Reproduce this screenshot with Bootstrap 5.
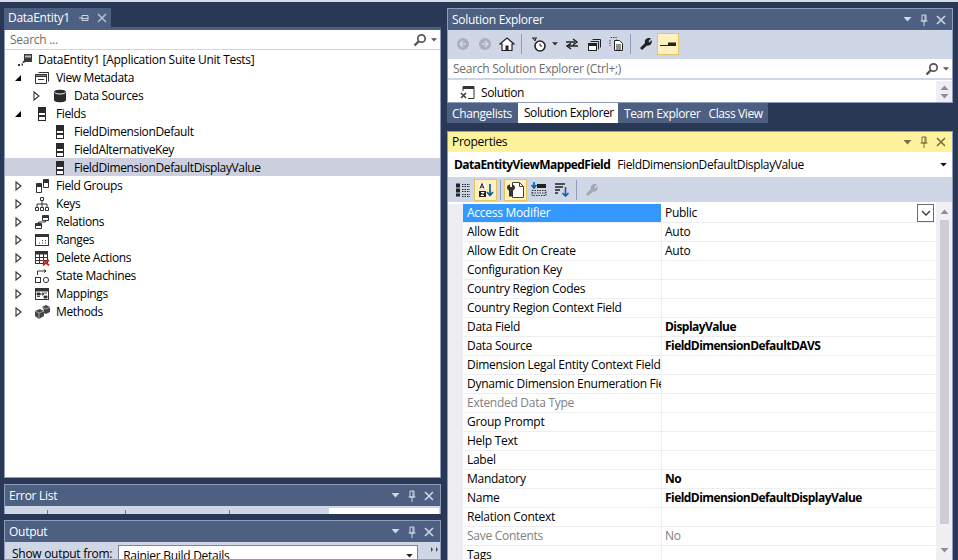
<!DOCTYPE html>
<html lang="en"><head><meta charset="utf-8"><title>Visual Studio</title>
<link href="https://cdn.jsdelivr.net/npm/bootstrap@5.3.0/dist/css/bootstrap.min.css" rel="stylesheet">
<style>
html,body{height:560px;overflow:hidden}
body{background:#293955;font:12px/18px "Open Sans","Noto Sans",sans-serif;color:#000;letter-spacing:-.28px}
.topstrip{height:2px;background:#d6dbe9}
.shell{height:558px;padding:6px 5px 0 4px;gap:6px}
.leftcol{width:437px;flex:none}
.rightcol{width:506px;flex:none}
.tabrow{height:19px}
.doctab{width:107px;height:19px;background:#4d6082;color:#fff;padding:0 0 0 4px;line-height:19px}
.pinbtn{color:#cfd6e5;margin-left:9px}
.xbtn{color:#b5bfd3;margin-left:8px}
.tabwell{height:3px;background:#4d6082}
.panelbox{border:1px solid #8e9bbc;background:#fff}
.treebox{height:450px;border-top:0}
.searchbar{height:20px;border-bottom:1px solid #cfd6e5;color:#6d6d6d;padding:1px 3px 0 5px}
.treerow{height:18px;line-height:18px;white-space:nowrap;padding-top:2px;letter-spacing:-.37px}
.treerow.rootrow{letter-spacing:-.28px}
.treerow.on{background:#ccd0de}
.lv0{padding-left:11px}.lv1{padding-left:4px}.lv2{padding-left:22px}
.arr{width:18px;flex:none;display:flex;justify-content:center}
.ic{width:18px;margin:0 5px 0 6px;flex:none;display:flex;justify-content:center}
.lv0 .ic{margin:0 4px 0 0}
.headbar{height:21px;background:#4d6082;color:#fff;padding:0 6px 0 4px;line-height:21px}
.headbar.act{background:#fff29d;color:#000;height:20px;line-height:20px}
.wbtns{gap:7px}
.errbox{height:30px}
.strip{height:8px;background:#cfd6e5;overflow:hidden}
.tick{height:4px;margin-top:4px;border-right:1px solid #6d7890;flex:none}
.t1{width:43px}.t2{width:78px}.t3{width:104px}.t4{width:99px;flex:none}
.whitebox{width:110px;height:6px;margin-top:2px;background:#fff;flex:none}
.outbox{height:40px;background:#cfd6e5;overflow:hidden}
.outtool{padding:3px 0 0 7px;color:#000;gap:6px;white-space:nowrap}
.fakeselect{width:300px;height:22px;background:#fff;border:1px solid #7d8797;padding:0 4px;line-height:18px;flex:none}
.grip{margin-left:7px;margin-top:2px;color:#444;flex:none}
.sebox{height:95px}
.toolbar{background:#cfd6e5}
.setool{height:28px;padding-left:4px}
.ptool{height:25px;padding-left:3px}
.tb{width:22px;height:22px;display:flex;align-items:center;justify-content:center;flex:none;border:1px solid transparent}
.ptool .tb{width:23px}
.tb.onbtn{background:#fff0c0;border-color:#e5c365}
.sep{width:1px;height:20px;background:#8e9bbc;margin:0 3px;flex:none}
.clk{width:20px;margin-left:4px}
.ddmini{margin:0 3px;flex:none}
.wr{margin-left:1px}
.searchse{height:22px;border-bottom:2px solid #cfd6e5;border-top:1px solid #cfd6e5;color:#6d6d6d;padding:0 3px 0 5px;margin-bottom:1px}
.solrow{height:21px;padding:2px 0 0 12px;gap:5px;line-height:21px;letter-spacing:-.37px}
.miniscroll{width:16px;background:#eeeef2;height:21px}
.tabsbar{height:20px;color:#fff;letter-spacing:-.37px}
.btab{background:#4d6082;padding:0 4px 0 6px;line-height:21px;white-space:nowrap}
.btab.first{padding:0 6px 0 5px}
.btab.last{padding:0 5px 0 4px}
.btab.on{background:#fff;color:#000;line-height:19px}
.gapv{height:8px}
.gaps{height:6px}
.propbox{height:429px;border-bottom:0}
.objsel{height:25px;padding:0 5px 0 6px;line-height:24px;letter-spacing:-.37px}
.objname{margin-left:7px}
.gridarea{overflow:hidden;height:358px;background:#fff;padding-top:2px}
.margin{width:15px;background:#eeeef2;flex:none}
.pgrid{width:472px;flex:none}
.prow{height:19px;border-bottom:1px solid #eeeef2;line-height:18px;white-space:nowrap}
.pname{width:199px;padding-left:4px;flex:none;overflow:hidden;border-right:1px solid #eeeef2}
.pval{padding-left:3px;flex:1}
.prow.sel .pname{width:198px;background:#39f;color:#fff;border-right:0;margin-right:1px}
.dim{color:#808080}
.bold{font-weight:700;letter-spacing:-.55px}
.ddbtn{width:17px;height:18px;border:1px solid #6d6d6d;background:#fff;margin-right:1px;display:flex;align-items:center;justify-content:center}
.pscroll{width:16px;flex:none;background:#f0f0f3;margin-left:1px;margin-top:-2px}
.thumb{width:9px;height:304px;background:#cdcdd3;margin:0 auto}
.arrcell{height:18px}
.arrcell.bot{margin-top:17px}
.flip{transform:scaleY(-1)}
.hc{color:#cfd6e5}
.hd{color:#7a6f3f}
.sc{color:#8b8ca0}
.cd{color:#555}
.ck{color:#222}
.gw{color:#a3a7b2}
</style></head><body>
<svg width="0" height="0" class="d-none" aria-hidden="true"><defs>
<symbol id="open" viewBox="0 0 10 10"><path d="M8 2v6H2z" fill="#000"/></symbol>
<symbol id="closed" viewBox="0 0 10 10"><path d="M3 1l5 4-5 4z" fill="#fff" stroke="#333" stroke-width="1.1"/></symbol>
<symbol id="fld" viewBox="0 0 16 16"><rect x="4.500" y="1.500" width="7" height="13" fill="#fff" stroke="#2a2a2a"/><rect x="5" y="2" width="6" height="5" fill="#2a2a2a"/><rect x="5" y="9" width="6" height="2" fill="#2a2a2a"/></symbol>
<symbol id="x" viewBox="0 0 10 10"><path d="M1 1l8 8M9 1l-8 8" stroke="currentColor" stroke-width="1.6" fill="none"/></symbol>
<symbol id="pin" viewBox="0 0 10 12"><path d="M3 1h4v6H3zM1.500 7h7M5 7v5M6 1v6" stroke="currentColor" fill="none"/></symbol>
<symbol id="drop" viewBox="0 0 8 5"><path d="M0 0h8L4 4.500z" fill="currentColor"/></symbol>
<symbol id="mag" viewBox="0 0 14 14"><circle cx="8.500" cy="5.500" r="3.700" fill="none" stroke="#555" stroke-width="1.700"/><path d="M6 8l-4.500 4.500" stroke="#555" stroke-width="2.400"/></symbol>
<symbol id="wrench" viewBox="0 0 14 14"><path d="M1 11l5-5C5 3 8 0 12 1.500L9.500 4l1 1.500 2-2.500C14 7 10 9.500 8 8.500L3 13z" fill="currentColor"/></symbol>
</defs></svg>
<div class="topstrip"></div>
<div class="shell d-flex">
 <div class="leftcol d-flex flex-column">
  <div class="tabrow"><div class="doctab d-flex align-items-center"><span>DataEntity1</span><svg class="pinbtn" width="10" height="10" viewBox="0 0 10 10"><path d="M0 5h3M3 2.500h6v5H3zM3 5.500h6" stroke="currentColor" fill="none"/></svg><svg class="xbtn" width="10" height="10"><use href="#x"/></svg></div></div>
  <div class="tabwell"></div>
  <div class="panelbox treebox">
   <div class="searchbar d-flex justify-content-between align-items-center"><span>Search ...</span><span class="d-flex align-items-center gap-1"><svg width="14" height="14"><use href="#mag"/></svg><svg class="cd" width="6" height="4"><use href="#drop"/></svg></span></div>
   <div class="treerow rootrow d-flex align-items-center lv0"><span class="ic"><svg width="16" height="16" viewBox="0 0 16 16"><rect x="7" y="2" width="8" height="8" fill="#3a3a3a"/><rect x="8" y="3.500" width="6" height="2" fill="#bbb"/><path d="M1 13h2M4.500 12.500h1.500M6 10.500l2-1.500" stroke="#333" stroke-width="2" fill="none"/></svg></span><span>DataEntity1 [Application Suite Unit Tests]</span></div>
   <div class="treerow d-flex align-items-center lv1"><span class="arr"><svg width="10" height="10"><use href="#open"/></svg></span><span class="ic"><svg width="16" height="16" viewBox="0 0 16 16"><path d="M4.500 2.500h10v9M1.500 4.500h11v9h-11z" fill="#fff" stroke="#333"/><path d="M1.500 4.500h11v2h-11zM4 9.500h6" fill="#888" stroke="#333"/></svg></span><span>View Metadata</span></div>
   <div class="treerow d-flex align-items-center lv2"><span class="arr"><svg width="10" height="10"><use href="#closed"/></svg></span><span class="ic"><svg width="14" height="14" viewBox="0 0 14 14"><path d="M1 3c0-3 12-3 12 0v8c0 3-12 3-12 0z" fill="#2a2a2a"/><path d="M1.500 3.500c2 2 9 2 11 0" stroke="#fff" fill="none"/></svg></span><span>Data Sources</span></div>
   <div class="treerow d-flex align-items-center lv1"><span class="arr"><svg width="10" height="10"><use href="#open"/></svg></span><span class="ic"><svg width="16" height="16"><use href="#fld"/></svg></span><span>Fields</span></div>
   <div class="treerow d-flex align-items-center lv2"><span class="arr"></span><span class="ic"><svg width="16" height="16"><use href="#fld"/></svg></span><span>FieldDimensionDefault</span></div>
   <div class="treerow d-flex align-items-center lv2"><span class="arr"></span><span class="ic"><svg width="16" height="16"><use href="#fld"/></svg></span><span>FieldAlternativeKey</span></div>
   <div class="treerow on d-flex align-items-center lv2"><span class="arr"></span><span class="ic"><svg width="16" height="16"><use href="#fld"/></svg></span><span>FieldDimensionDefaultDisplayValue</span></div>
   <div class="treerow d-flex align-items-center lv1"><span class="arr"><svg width="10" height="10"><use href="#closed"/></svg></span><span class="ic"><svg width="16" height="16" viewBox="0 0 16 16"><path d="M2.500 5.500h5v9h-5zM9.500 1.500h5v8h-5z" fill="#fff" stroke="#333"/><path d="M3 6h4v3H3zM10 2h4v3h-4z" fill="#333"/></svg></span><span>Field Groups</span></div>
   <div class="treerow d-flex align-items-center lv1"><span class="arr"><svg width="10" height="10"><use href="#closed"/></svg></span><span class="ic"><svg width="16" height="16" viewBox="0 0 16 16"><path d="M6.500 1.500h3v3h-3zM1.500 11.500h3v3h-3zM6.500 11.500h3v3h-3zM11.500 11.500h3v3h-3zM8 4.500v7M3 11.500V8h10v3.500" fill="none" stroke="#333"/></svg></span><span>Keys</span></div>
   <div class="treerow d-flex align-items-center lv1"><span class="arr"><svg width="10" height="10"><use href="#closed"/></svg></span><span class="ic"><svg width="16" height="16" viewBox="0 0 16 16"><path d="M1.500 9.500h6v5h-6zM8.500 1.500h6v5h-6zM4.500 9.500V8h7V6.500" fill="#fff" stroke="#333"/><path d="M2 10h5v2H2zM9 2h5v2H9z" fill="#333"/></svg></span><span>Relations</span></div>
   <div class="treerow d-flex align-items-center lv1"><span class="arr"><svg width="10" height="10"><use href="#closed"/></svg></span><span class="ic"><svg width="16" height="16" viewBox="0 0 16 16"><rect x="1.500" y="2.500" width="13" height="11" fill="#fff" stroke="#333"/><path d="M1.500 3h13v2h-13z" fill="#333"/><path d="M5 11h1M8 11h1M11 11h1M8 8.500h1M11 8.500h1" stroke="#333"/></svg></span><span>Ranges</span></div>
   <div class="treerow d-flex align-items-center lv1"><span class="arr"><svg width="10" height="10"><use href="#closed"/></svg></span><span class="ic"><svg width="16" height="16" viewBox="0 0 16 16"><rect x="1.500" y="1.500" width="12" height="12" fill="#fff" stroke="#333"/><path d="M1.500 2h12v2h-12zM1.500 7.500h12M1.500 10.500h12M5.500 4v10M9.500 4v10" fill="#333" stroke="#333"/><path d="M9 10l6 5.500M15 10l-6 5.500" stroke="#c5281c" stroke-width="1.700"/></svg></span><span>Delete Actions</span></div>
   <div class="treerow d-flex align-items-center lv1"><span class="arr"><svg width="10" height="10"><use href="#closed"/></svg></span><span class="ic"><svg width="16" height="16" viewBox="0 0 16 16"><rect x="1.500" y="9.500" width="5" height="5" fill="#fff" stroke="#333"/><circle cx="12" cy="12" r="2.600" fill="#fff" stroke="#333"/><path d="M3.500 7V3h8M10 1.500l2 1.500-2 1.500" fill="none" stroke="#333"/></svg></span><span>State Machines</span></div>
   <div class="treerow d-flex align-items-center lv1"><span class="arr"><svg width="10" height="10"><use href="#closed"/></svg></span><span class="ic"><svg width="16" height="16" viewBox="0 0 16 16"><rect x="1.500" y="2.500" width="13" height="11" fill="#fff" stroke="#333"/><path d="M1.500 3h13v2h-13zM3 7h3v2H3zM3 10.500h3M10 7h3M10 10h3v2h-3zM6 8h4M8.500 6.500L10 8l-1.500 1.500" fill="#333" stroke="#333" stroke-width=".9"/></svg></span><span>Mappings</span></div>
   <div class="treerow d-flex align-items-center lv1"><span class="arr"><svg width="10" height="10"><use href="#closed"/></svg></span><span class="ic"><svg width="17" height="16" viewBox="0 0 17 16"><path d="M1 7l5-2 4 2v5l-5 3-4-3zM8 3l4-2 4 2v5l-4 2-2-1V6z" fill="#444"/><path d="M1 7l4 2 5-2M8 3l4 2 4-2M5 9v6" stroke="#bbb" stroke-width=".8" fill="none"/></svg></span><span>Methods</span></div>
  </div>
  <div class="gaps"></div>
  <div class="panelbox errbox">
   <div class="headbar d-flex justify-content-between align-items-center"><span>Error List</span><span class="wbtns d-flex align-items-center hc"><svg width="9" height="5"><use href="#drop"/></svg><svg width="10" height="12"><use href="#pin"/></svg><svg width="10" height="10"><use href="#x"/></svg></span></div>
   <div class="strip d-flex"><span class="tick t1"></span><span class="tick t2"></span><span class="tick t3"></span><span class="t4"></span><span class="whitebox"></span></div>
  </div>
  <div class="gaps"></div>
  <div class="panelbox outbox">
   <div class="headbar d-flex justify-content-between align-items-center"><span>Output</span><span class="wbtns d-flex align-items-center hc"><svg width="9" height="5"><use href="#drop"/></svg><svg width="10" height="12"><use href="#pin"/></svg><svg width="10" height="10"><use href="#x"/></svg></span></div>
   <div class="outtool d-flex"><span>Show output from:</span><div class="fakeselect d-flex justify-content-between align-items-center"><span>Rainier Build Details</span><svg class="ck" width="7" height="4"><use href="#drop"/></svg></div><svg class="grip" width="8" height="5" viewBox="0 0 8 5"><path d="M0 0l2 2.500L0 5zM5 0l2 2.500L5 5z" fill="currentColor"/></svg></div>
  </div>
 </div>
 <div class="rightcol d-flex flex-column">
  <div class="panelbox sebox">
   <div class="headbar d-flex justify-content-between align-items-center"><span>Solution Explorer</span><span class="wbtns d-flex align-items-center hc"><svg width="9" height="5"><use href="#drop"/></svg><svg width="10" height="12"><use href="#pin"/></svg><svg width="10" height="10"><use href="#x"/></svg></span></div>
   <div class="toolbar setool d-flex align-items-center">
    <span class="tb"><svg width="14" height="14" viewBox="0 0 14 14"><circle cx="7" cy="7" r="6" fill="#a9afbc"/><path d="M10 7H4.500M7 4L4 7l3 3" stroke="#cfd6e5" stroke-width="1.600" fill="none"/></svg></span>
    <span class="tb"><svg width="14" height="14" viewBox="0 0 14 14"><circle cx="7" cy="7" r="6" fill="#a9afbc"/><path d="M4 7h5.500M7 4l3 3-3 3" stroke="#cfd6e5" stroke-width="1.600" fill="none"/></svg></span>
    <span class="tb"><svg width="16" height="16" viewBox="0 0 16 16"><path d="M1 8l7-6 7 6h-2v6.500H3V8z" fill="#fff" stroke="#222" stroke-width="1.200"/><rect x="6.500" y="9.500" width="3" height="5" fill="#222"/></svg></span>
    <span class="sep"></span>
    <span class="tb clk"><svg width="15" height="15" viewBox="0 0 15 15"><circle cx="8" cy="9" r="5" fill="#fff" stroke="#222" stroke-width="1.600"/><path d="M8 6.500V9h2M0 1h5M1 1l2 3 1-3" stroke="#222" fill="none"/></svg></span>
    <svg class="ddmini" width="6" height="4" style="color:#333"><use href="#drop"/></svg>
    <span class="tb"><svg width="14" height="14" viewBox="0 0 14 14"><path d="M1 5h9M8 2l4 3-4 3M13 9H4M6 6.500L2 9l4 3" stroke="#222" stroke-width="1.500" fill="none"/></svg></span>
    <span class="tb"><svg width="15" height="15" viewBox="0 0 15 15"><path d="M5.500 2.500h8v8M3.500 4.500h8v8" fill="none" stroke="#222"/><rect x="1.500" y="6.500" width="8" height="7" fill="#fff" stroke="#222"/><path d="M2 7h7v2H2z" fill="#222"/></svg></span>
    <span class="tb"><svg width="15" height="16" viewBox="0 0 15 16"><path d="M1.500 1.500h6v2M1 4v6" stroke="#444" stroke-dasharray="1.500 1" fill="none"/><path d="M5.500 4.500h5l3 3v7h-8z" fill="#fff" stroke="#222"/><path d="M7 9h5M7 11h5M7 13h5" stroke="#222"/></svg></span>
    <span class="sep"></span>
    <span class="tb wr ck"><svg width="14" height="14"><use href="#wrench"/></svg></span>
    <span class="tb onbtn"><svg width="16" height="6" viewBox="0 0 16 6"><path d="M0 4h8V1.500h8V5H0z" fill="#222"/></svg></span>
   </div>
   <div class="searchse d-flex justify-content-between align-items-center"><span>Search Solution Explorer (Ctrl+;)</span><span class="d-flex align-items-center gap-1"><svg width="14" height="14"><use href="#mag"/></svg><svg class="cd" width="6" height="4"><use href="#drop"/></svg></span></div>
   <div class="d-flex justify-content-between"><div class="solrow d-flex align-items-center"><svg width="16" height="15" viewBox="0 0 16 15"><path d="M3 6V1.500h11v12H8" fill="none" stroke="#333"/><path d="M3 2h11v2H3z" fill="#333"/><path d="M1 8l5 5M6 8l-5 5" stroke="#333" stroke-width="1.400"/></svg><span>Solution</span></div>
    <div class="miniscroll d-flex flex-column align-items-center justify-content-center gap-1 sc"><svg width="9" height="5" class="d-block flip"><use href="#drop"/></svg><svg width="9" height="5" class="d-block"><use href="#drop"/></svg></div></div>
  </div>
  <div class="tabsbar d-flex">
   <span class="btab first">Changelists</span><span class="btab on">Solution Explorer</span><span class="btab">Team Explorer</span><span class="btab last">Class View</span>
  </div>
  <div class="gapv"></div>
  <div class="panelbox propbox">
   <div class="headbar act d-flex justify-content-between align-items-center"><span>Properties</span><span class="wbtns d-flex align-items-center hd"><svg width="9" height="5"><use href="#drop"/></svg><svg width="10" height="12"><use href="#pin"/></svg><svg width="10" height="10"><use href="#x"/></svg></span></div>
   <div class="objsel d-flex justify-content-between align-items-center"><span><span class="bold">DataEntityViewMappedField</span><span class="objname">FieldDimensionDefaultDisplayValue</span></span><svg width="7" height="4" style="color:#111"><use href="#drop"/></svg></div>
   <div class="toolbar ptool d-flex align-items-center">
    <span class="tb"><svg width="16" height="16" viewBox="0 0 16 16"><path d="M1 1.500h4v4H1zM1 6.500h4v4H1zM1 11.500h4v3H1z" fill="#222"/><path d="M7 2.500h8M7 4.500h8M7 7.500h8M7 9.500h8M7 12.500h8M7 14.500h8" stroke="#222" stroke-dasharray="1.500 1"/></svg></span>
    <span class="tb onbtn"><svg width="16" height="16" viewBox="0 0 16 16"><rect x="1" y="1" width="7" height="6" fill="#fff"/><path d="M2 6.500l2-5 2 5M2.800 5h2.400" stroke="#222" fill="none"/><rect x="1" y="9" width="7" height="6" fill="#222"/><path d="M3 10.500h3l-3 3h3" stroke="#fff" fill="none"/><path d="M12 2v11M9 10l3 3.500 3-3.500" stroke="#0a5fa8" stroke-width="1.700" fill="none"/></svg></span>
    <span class="sep"></span>
    <span class="tb onbtn"><svg width="19" height="18" viewBox="0 0 19 18"><path d="M6.500 1.500h7l4 4v11h-11z" fill="#fff" stroke="#444"/><path d="M13.500 1.500v4h4" fill="none" stroke="#444"/><path d="M1 6.500c0-2 1.500-3 3-3v2.500h2V3.500c1.500 0 3 1 3 3 0 1.500-1 2.500-2 3v6H3v-6c-1-.5-2-1.500-2-3z" fill="#333"/></svg></span>
    <span class="tb"><svg width="16" height="15" viewBox="0 0 16 15"><path d="M6 2h9v4H6z" fill="#222"/><path d="M3 0v5M0.500 3L3 6l2.500-3" stroke="#0a5fa8" stroke-width="1.600" fill="none"/><path d="M1 8.500h14v5H1zM1 11h14" stroke="#333" stroke-dasharray="1.500 1" fill="none"/></svg></span>
    <span class="tb"><svg width="16" height="15" viewBox="0 0 16 15"><path d="M1 2h10M1 5h8M1 8h5M1 11h3" stroke="#222" stroke-width="1.500"/><path d="M11.500 5v9M8.500 11l3 3 3-3" stroke="#0a5fa8" stroke-width="1.600" fill="none"/></svg></span>
    <span class="sep"></span>
    <span class="tb gw"><svg width="14" height="14"><use href="#wrench"/></svg></span>
   </div>
   <div class="gridarea d-flex">
    <div class="margin"></div>
    <div class="pgrid">
     <div class="prow sel d-flex"><div class="pname">Access Modifier</div><div class="pval d-flex justify-content-between"><span>Public</span><span class="ddbtn"><svg width="10" height="6" viewBox="0 0 10 6"><path d="M1 1l4 4 4-4" stroke="#444" stroke-width="1.500" fill="none"/></svg></span></div></div>
     <div class="prow d-flex"><div class="pname">Allow Edit</div><div class="pval">Auto</div></div>
     <div class="prow d-flex"><div class="pname">Allow Edit On Create</div><div class="pval">Auto</div></div>
     <div class="prow d-flex"><div class="pname">Configuration Key</div><div class="pval"></div></div>
     <div class="prow d-flex"><div class="pname">Country Region Codes</div><div class="pval"></div></div>
     <div class="prow d-flex"><div class="pname">Country Region Context Field</div><div class="pval"></div></div>
     <div class="prow d-flex"><div class="pname">Data Field</div><div class="pval bold">DisplayValue</div></div>
     <div class="prow d-flex"><div class="pname">Data Source</div><div class="pval bold">FieldDimensionDefaultDAVS</div></div>
     <div class="prow d-flex"><div class="pname">Dimension Legal Entity Context Field</div><div class="pval"></div></div>
     <div class="prow d-flex"><div class="pname">Dynamic Dimension Enumeration Field</div><div class="pval"></div></div>
     <div class="prow d-flex"><div class="pname dim">Extended Data Type</div><div class="pval"></div></div>
     <div class="prow d-flex"><div class="pname">Group Prompt</div><div class="pval"></div></div>
     <div class="prow d-flex"><div class="pname">Help Text</div><div class="pval"></div></div>
     <div class="prow d-flex"><div class="pname">Label</div><div class="pval"></div></div>
     <div class="prow d-flex"><div class="pname">Mandatory</div><div class="pval bold">No</div></div>
     <div class="prow d-flex"><div class="pname">Name</div><div class="pval bold">FieldDimensionDefaultDisplayValue</div></div>
     <div class="prow d-flex"><div class="pname">Relation Context</div><div class="pval"></div></div>
     <div class="prow d-flex"><div class="pname dim">Save Contents</div><div class="pval dim">No</div></div>
     <div class="prow d-flex"><div class="pname">Tags</div><div class="pval"></div></div>
    </div>
    <div class="pscroll d-flex flex-column sc">
     <div class="arrcell d-flex align-items-center justify-content-center"><svg width="9" height="5" class="flip"><use href="#drop"/></svg></div>
     <div class="thumb"></div>
     <div class="arrcell bot d-flex align-items-center justify-content-center"><svg width="9" height="5"><use href="#drop"/></svg></div>
    </div>
   </div>
  </div>
 </div>
</div>
</body></html>
